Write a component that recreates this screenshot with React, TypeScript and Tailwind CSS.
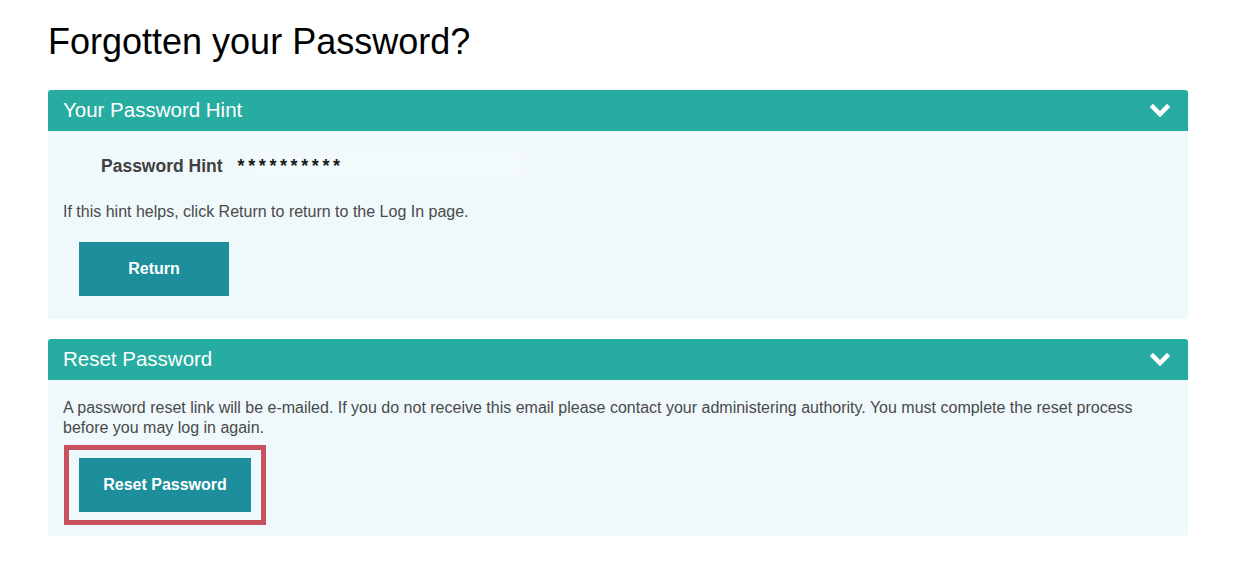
const Chevron = () => (
  <svg width="20" height="14" viewBox="0 0 20 14" className="block">
    <polyline
      points="3,3 10,10 17,3"
      fill="none"
      stroke="#ffffff"
      strokeWidth="4.5"
      strokeLinecap="square"
    />
  </svg>
)

const PanelHeader = ({ title }: { title: string }) => (
  <div className="flex h-[41px] items-center justify-between rounded-t-[3px] bg-[#26aca1] pl-[15px] pr-[18px]">
    <h2 className="text-[20.5px] text-white">{title}</h2>
    <Chevron />
  </div>
)

const ActionButton = ({ label, width }: { label: string; width: string }) => (
  <button
    className={`flex h-[54px] items-center justify-center bg-[#1d8e9b] text-[16px] font-bold text-white ${width}`}
  >
    {label}
  </button>
)

export default function App() {
  return (
    <div
      className="min-h-screen bg-white pl-[48px] pr-[50px] pt-[22px]"
      style={{ fontFamily: '"Liberation Sans", Arial, sans-serif' }}
    >
      <h1 className="mb-[28px] text-[36px] leading-[40px] text-black">Forgotten your Password?</h1>

      <section className="mb-[20px]">
        <PanelHeader title="Your Password Hint" />
        <div className="rounded-b-[3px] bg-[#eff8fa] px-[15px] pb-[23px] pt-[22px]">
          <div className="flex h-[26px] items-center pl-[38px]">
            <span className="text-[17.5px] font-bold text-[#404040]">Password Hint</span>
            <span className="relative ml-[15px]">
              <span className="absolute -top-[10px] left-[4px] h-[42px] w-[292px] rounded-full bg-white/25 blur-[4px]" />
              <span className="relative text-[18px] font-bold tracking-[3.6px] text-[#1a1a1a]">**********</span>
            </span>
          </div>
          <p className="mt-[21px] text-[16px] leading-[24px] text-[#4a4a4a]">
            If this hint helps, click Return to return to the Log In page.
          </p>
          <div className="mt-[18px] pl-[16px]">
            <ActionButton label="Return" width="w-[150px]" />
          </div>
        </div>
      </section>

      <section>
        <PanelHeader title="Reset Password" />
        <div className="rounded-b-[3px] bg-[#eff8fa] px-[15px] pb-[11px] pt-[18px]">
          <p className="text-[16px] leading-[20px] text-[#4a4a4a]">
            A password reset link will be e-mailed. If you do not receive this email please contact your administering
            authority. You must complete the reset process before you may log in again.
          </p>
          <div className="ml-[1px] mt-[7px] inline-block border-[5px] border-[#c9505f] px-[10px] py-[8px]">
            <ActionButton label="Reset Password" width="w-[172px]" />
          </div>
        </div>
      </section>
    </div>
  )
}
